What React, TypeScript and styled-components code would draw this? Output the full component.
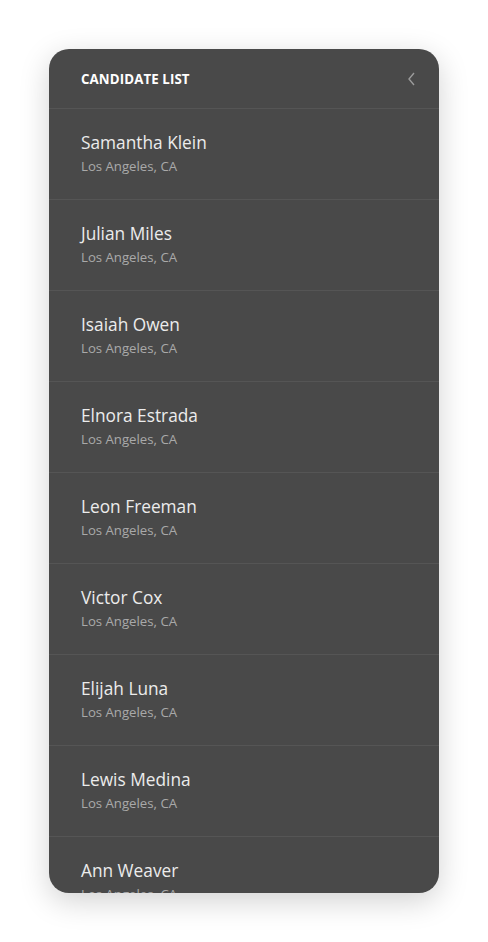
import React from "react";
import styled, { createGlobalStyle } from "styled-components";

const GlobalStyle = createGlobalStyle`
  body {
    margin: 0;
    background: #ffffff;
    font-family: "Open Sans", "Noto Sans", sans-serif;
  }
`;

const Page = styled.div`
  padding: 49px 49px;
  display: flex;
  justify-content: center;
`;

const Card = styled.div`
  width: 390px;
  height: 844px;
  background: #494949;
  border-radius: 20px;
  overflow: hidden;
  box-shadow: 0 8px 30px rgba(0, 0, 0, 0.18);
  display: flex;
  flex-direction: column;
`;

const Header = styled.div`
  height: 59px;
  flex-shrink: 0;
  display: flex;
  align-items: center;
  justify-content: space-between;
  padding: 0 21px 0 32px;
  border-bottom: 1px solid #555555;
`;

const Title = styled.h1`
  margin: 0;
  font-size: 13.3px;
  font-weight: 700;
  color: #ffffff;
  letter-spacing: 0.1px;
`;

const BackButton = styled.button`
  background: none;
  border: none;
  padding: 0;
  display: flex;
  cursor: pointer;
`;

const List = styled.ul`
  list-style: none;
  margin: 0;
  padding: 0;
  overflow: hidden;
`;

const Item = styled.li`
  height: 91px;
  padding: 22px 32px 0;
  box-sizing: border-box;
  border-bottom: 1px solid #555555;
`;

const Name = styled.div`
  font-size: 17.3px;
  color: #ececec;
  line-height: 24px;
`;

const Location = styled.div`
  font-size: 13.2px;
  color: #a9a9a9;
  line-height: 20px;
  margin-top: 1px;
`;

const candidates = [
  "Samantha Klein",
  "Julian Miles",
  "Isaiah Owen",
  "Elnora Estrada",
  "Leon Freeman",
  "Victor Cox",
  "Elijah Luna",
  "Lewis Medina",
  "Ann Weaver",
];

export default function App() {
  return (
    <>
      <GlobalStyle />
      <Page>
        <Card>
          <Header>
            <Title>CANDIDATE LIST</Title>
            <BackButton aria-label="back">
              <svg width="12" height="16" viewBox="0 0 12 16">
                <path d="M8 2 L3 8 L8 14" fill="none" stroke="#9a9a9a" strokeWidth="1.4" />
              </svg>
            </BackButton>
          </Header>
          <List>
            {candidates.map((name) => (
              <Item key={name}>
                <Name>{name}</Name>
                <Location>Los Angeles, CA</Location>
              </Item>
            ))}
          </List>
        </Card>
      </Page>
    </>
  );
}
